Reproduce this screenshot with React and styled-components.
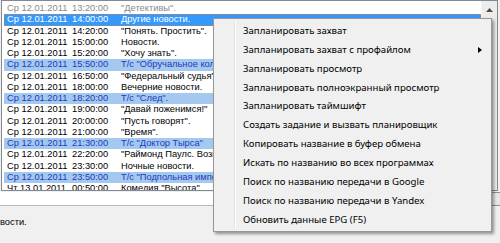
import React from 'react';
import styled, {createGlobalStyle} from 'styled-components';

const GlobalStyle = createGlobalStyle`
    body {
        margin: 0;
        background: #f0f0f0;
        overflow: hidden;
    }
`
const Window = styled.div`
    position: relative;
    width: 500px;
    height: 243px;
    overflow: hidden;
    font-family: "Liberation Sans", Arial, sans-serif;
`
const ListBox = styled.div`
    margin-left: 1px;
    width: 495px;
    height: 189px;
    border: 1px solid #828790;
    background: #fff;
    display: flex;
`
const Rows = styled.div`
    flex: 1;
    overflow: hidden;
    padding: 2px 0 0 2px;
`
const Row = styled.div`
    box-sizing: border-box;
    height: 11.25px;
    line-height: 11.25px;
    display: grid;
    grid-template-columns: 65px 49px 1fr;
    padding-left: 3px;
    font-size: 9.3px;
    white-space: nowrap;
    color: ${p => p.$kind === 'past' ? '#8a8a8a' : p.$kind === 'sel' ? '#fff' : p.$kind === 'mark' ? '#1d3bb8' : '#000'};
    background: ${p => p.$kind === 'sel' ? '#3399ff' : p.$kind === 'mark' ? '#a4c8f0' : 'transparent'};
    outline: ${p => p.$kind === 'sel' ? '1px dotted #c8823a' : 'none'};
    outline-offset: -1px;
`
const Scrollbar = styled.div`
    width: 15px;
    background: #ececec;
    border-left: 1px solid #f4f4f4;
    display: flex;
    flex-direction: column;
`
const ScrollButton = styled.div`
    height: 17px;
    display: flex;
    align-items: center;
    justify-content: center;
`
const Bottom = styled.div`
    display: flex;
    height: 14px;
    margin-top: 1px;
`
const DescBox = styled.div`
    flex: 1;
    background: #fff;
    border-bottom: 1px solid #b8b8b8;
`
const SideButton = styled.div`
    width: 30px;
    margin: 0 -22px 0 2px;
    border: 1px solid #8e8f8f;
    border-radius: 3px;
    background: #e6e6e6;
`
const Status = styled.div`
    font-size: 9.3px;
    padding: 11px 0 0 0;
    color: #000;
`
const Menu = styled.div`
    position: absolute;
    left: 213px;
    top: 18px;
    width: 277px;
    box-sizing: content-box;
    padding: 3px 0 2px;
    background: #f0f0f0;
    border: 1px solid #979797;
    box-shadow: 2px 2px 3px rgba(0, 0, 0, 0.4);
    font-family: "Noto Sans", "Open Sans", sans-serif;
    font-size: 9.6px;
    color: #000;
    &:before {
        content: "";
        position: absolute;
        top: 2px;
        bottom: 2px;
        left: 20px;
        width: 1px;
        background: #e2e3e3;
        border-right: 1px solid #fff;
    }
`
const MenuItem = styled.div`
    height: 18.86px;
    line-height: 18.86px;
    padding-left: 29px;
    display: flex;
    justify-content: space-between;
    align-items: center;
    white-space: nowrap;
`
const Arrow = styled.span`
    width: 0;
    height: 0;
    border-top: 3.5px solid transparent;
    border-bottom: 3.5px solid transparent;
    border-left: 4px solid #000;
    margin-right: 9px;
`

const rows = [
    ['Ср 12.01.2011', '13:20:00', '"Детективы".', 'past'],
    ['Ср 12.01.2011', '14:00:00', 'Другие новости.', 'sel'],
    ['Ср 12.01.2011', '14:20:00', '"Понять. Простить".'],
    ['Ср 12.01.2011', '15:00:00', 'Новости.'],
    ['Ср 12.01.2011', '15:20:00', '"Хочу знать".'],
    ['Ср 12.01.2011', '15:50:00', 'Т/с "Обручальное кольцо"', 'mark'],
    ['Ср 12.01.2011', '16:50:00', '"Федеральный судья"'],
    ['Ср 12.01.2011', '18:00:00', 'Вечерние новости.'],
    ['Ср 12.01.2011', '18:20:00', 'Т/с "След".', 'mark'],
    ['Ср 12.01.2011', '19:00:00', '"Давай поженимся!"'],
    ['Ср 12.01.2011', '20:00:00', '"Пусть говорят".'],
    ['Ср 12.01.2011', '21:00:00', '"Время".'],
    ['Ср 12.01.2011', '21:30:00', 'Т/с "Доктор Тырса"', 'mark'],
    ['Ср 12.01.2011', '22:20:00', '"Раймонд Паулс. Возвращение"'],
    ['Ср 12.01.2011', '23:30:00', 'Ночные новости.'],
    ['Ср 12.01.2011', '23:50:00', 'Т/с "Подпольная империя"', 'mark'],
    ['Чт 13.01.2011', '00:50:00', 'Комедия "Высота"'],
];

const menuItems = [
    'Запланировать захват',
    'Запланировать захват с профайлом',
    'Запланировать просмотр',
    'Запланировать полноэкранный просмотр',
    'Запланировать таймшифт',
    'Создать задание и вызвать планировщик',
    'Копировать название в буфер обмена',
    'Искать по названию во всех программах',
    'Поиск по названию передачи в Google',
    'Поиск по названию передачи в Yandex',
    'Обновить данные EPG (F5)',
];

const App = () => {
    return (
        <Window>
            <GlobalStyle />
            <ListBox>
                <Rows>
                    {rows.map((r, i) => (
                        <Row key={i} $kind={r[3]}>
                            <span>{r[0]}</span>
                            <span>{r[1]}</span>
                            <span>{r[2]}</span>
                        </Row>
                    ))}
                </Rows>
                <Scrollbar>
                    <ScrollButton>
                        <svg width="7" height="4" viewBox="0 0 7 4">
                            <path d="M0 4 L3.5 0 L7 4 Z" fill="#4d4d4d" />
                        </svg>
                    </ScrollButton>
                </Scrollbar>
            </ListBox>
            <Bottom>
                <DescBox />
                <SideButton />
            </Bottom>
            <Status>вости.</Status>
            <Menu>
                {menuItems.map((m, i) => (
                    <MenuItem key={i}>
                        <span>{m}</span>
                        {i === 1 && <Arrow />}
                    </MenuItem>
                ))}
            </Menu>
        </Window>
    );
};

export default App;
